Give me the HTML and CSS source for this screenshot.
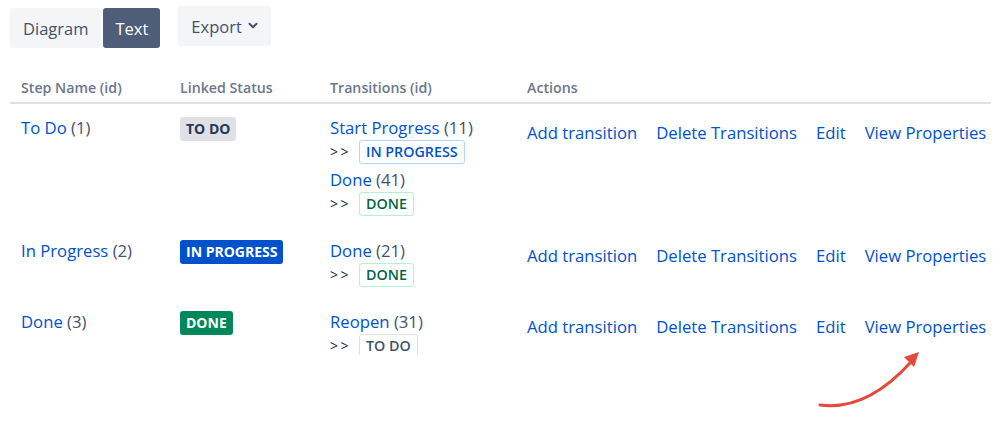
FILE: index.html
```html
<!DOCTYPE html>
<html>
<head>
<meta charset="utf-8">
<link rel="stylesheet" href="styles.css">
</head>
<body>
<div class="page">
  <div class="toolbar">
    <div class="btn-group">
      <button class="btn">Diagram</button>
      <button class="btn btn-active">Text</button>
    </div>
    <button class="btn btn-export">Export <svg class="chev" width="10" height="8" viewBox="0 0 10 8"><path d="M1.5 1.8 L5 5.3 L8.5 1.8" fill="none" stroke="#42526e" stroke-width="2" stroke-linecap="round" stroke-linejoin="round"/></svg></button>
  </div>
  <div class="table-clip">
    <table class="steps">
      <colgroup>
        <col class="c1"><col class="c2"><col class="c3"><col class="c4">
      </colgroup>
      <thead>
        <tr><th>Step Name (id)</th><th>Linked Status</th><th>Transitions (id)</th><th>Actions</th></tr>
      </thead>
      <tbody>
        <tr>
          <td><a class="link">To Do</a> <span class="num">(1)</span></td>
          <td><span class="loz loz-todo">TO DO</span></td>
          <td>
            <div class="tr-name"><a class="link">Start Progress</a> <span class="num">(11)</span></div>
            <div class="tr-target"><span class="gt">&gt;&gt;</span><span class="sub sub-prog">IN PROGRESS</span></div>
            <div class="tr-name"><a class="link">Done</a> <span class="num">(41)</span></div>
            <div class="tr-target"><span class="gt">&gt;&gt;</span><span class="sub sub-done">DONE</span></div>
          </td>
          <td class="actions"><div class="act"><a class="link">Add transition</a><a class="link">Delete Transitions</a><a class="link">Edit</a><a class="link">View Properties</a></div></td>
        </tr>
        <tr>
          <td><a class="link">In Progress</a> <span class="num">(2)</span></td>
          <td><span class="loz loz-prog">IN PROGRESS</span></td>
          <td>
            <div class="tr-name"><a class="link">Done</a> <span class="num">(21)</span></div>
            <div class="tr-target"><span class="gt">&gt;&gt;</span><span class="sub sub-done">DONE</span></div>
          </td>
          <td class="actions"><div class="act"><a class="link">Add transition</a><a class="link">Delete Transitions</a><a class="link">Edit</a><a class="link">View Properties</a></div></td>
        </tr>
        <tr>
          <td><a class="link">Done</a> <span class="num">(3)</span></td>
          <td><span class="loz loz-done">DONE</span></td>
          <td>
            <div class="tr-name"><a class="link">Reopen</a> <span class="num">(31)</span></div>
            <div class="tr-target"><span class="gt">&gt;&gt;</span><span class="sub sub-todo">TO DO</span></div>
          </td>
          <td class="actions"><div class="act"><a class="link">Add transition</a><a class="link">Delete Transitions</a><a class="link">Edit</a><a class="link">View Properties</a></div></td>
        </tr>
      </tbody>
    </table>
  </div>
  <svg class="arrow" width="999" height="428" viewBox="0 0 999 428">
    <path d="M820 405 C 850 409, 880 396, 910 363" fill="none" stroke="#e5493a" stroke-width="3" stroke-linecap="round"/>
    <polygon points="919,352 904,357 914,367" fill="#e5493a"/>
  </svg>
</div>
</body>
</html>
```

FILE: styles.css
```css
html, body {
  margin: 0;
  padding: 0;
  background: #ffffff;
}
body {
  font-family: "Open Sans", "Noto Sans", sans-serif;
  color: #42526e;
}
.page {
  position: relative;
  width: 999px;
  height: 428px;
  overflow: hidden;
}
.toolbar {
  display: flex;
  align-items: flex-start;
  padding: 8px 0 0 10px;
  gap: 18px;
}
.btn-group {
  display: flex;
  gap: 2px;
}
.btn {
  font-family: inherit;
  font-size: 16.5px;
  color: #42526e;
  background: #f4f5f7;
  border: none;
  border-radius: 3px;
  height: 40px;
  padding: 0 13px;
  display: flex;
  align-items: center;
}
.btn-active {
  background: #4e5d78;
  color: #ffffff;
  padding: 0 12px;
}
.btn-export {
  margin-top: -2px;
  gap: 6px;
}
.chev {
  display: block;
}
.table-clip {
  margin-top: 30px;
  padding: 0 8px 0 10px;
  height: 277px;
  overflow: hidden;
}
.steps {
  width: 981px;
  border-collapse: collapse;
  table-layout: fixed;
}
.c1 { width: 159px; }
.c2 { width: 150px; }
.c3 { width: 197px; }
.c4 { width: auto; }
.steps th {
  text-align: left;
  font-size: 14.2px;
  font-weight: 600;
  color: #6b778c;
  padding: 0 11px 4px;
  border-bottom: 2px solid #dfe1e6;
  line-height: 20px;
}
.steps td {
  vertical-align: top;
  padding: 12px 11px 11px;
  font-size: 16.7px;
  line-height: 24px;
}
.link {
  color: #0052cc;
  text-decoration: none;
}
.num {
  color: #42526e;
}
.loz {
  display: inline-block;
  font-size: 14px;
  font-weight: 700;
  line-height: 16px;
  padding: 4px 6px;
  border-radius: 3px;
}
.loz-todo { background: #dfe1e6; color: #253858; }
.loz-prog { background: #0052cc; color: #ffffff; }
.loz-done { background: #00875a; color: #ffffff; }
.tr-name {
  line-height: 24px;
}
.tr-target {
  display: flex;
  align-items: center;
  gap: 8px;
  height: 24px;
  margin-bottom: 4px;
}
.tr-target:last-child {
  margin-bottom: 0;
}
.gt {
  font-size: 14px;
  letter-spacing: 2.5px;
  color: #172b4d;
}
.sub {
  display: inline-block;
  font-size: 14.3px;
  font-weight: 600;
  line-height: 16px;
  padding: 3px 6px;
  border: 1px solid;
  border-radius: 3px;
  background: #ffffff;
}
.sub-prog { border-color: #b3d4ff; color: #0052cc; }
.sub-done { border-color: #abf5d1; color: #006644; }
.sub-todo { border-color: #dfe1e6; color: #42526e; }
.steps td.actions {
  padding-top: 17px;
}
.act {
  display: flex;
  gap: 19px;
  white-space: nowrap;
}
.arrow {
  position: absolute;
  left: 0;
  top: 0;
  pointer-events: none;
}
```
